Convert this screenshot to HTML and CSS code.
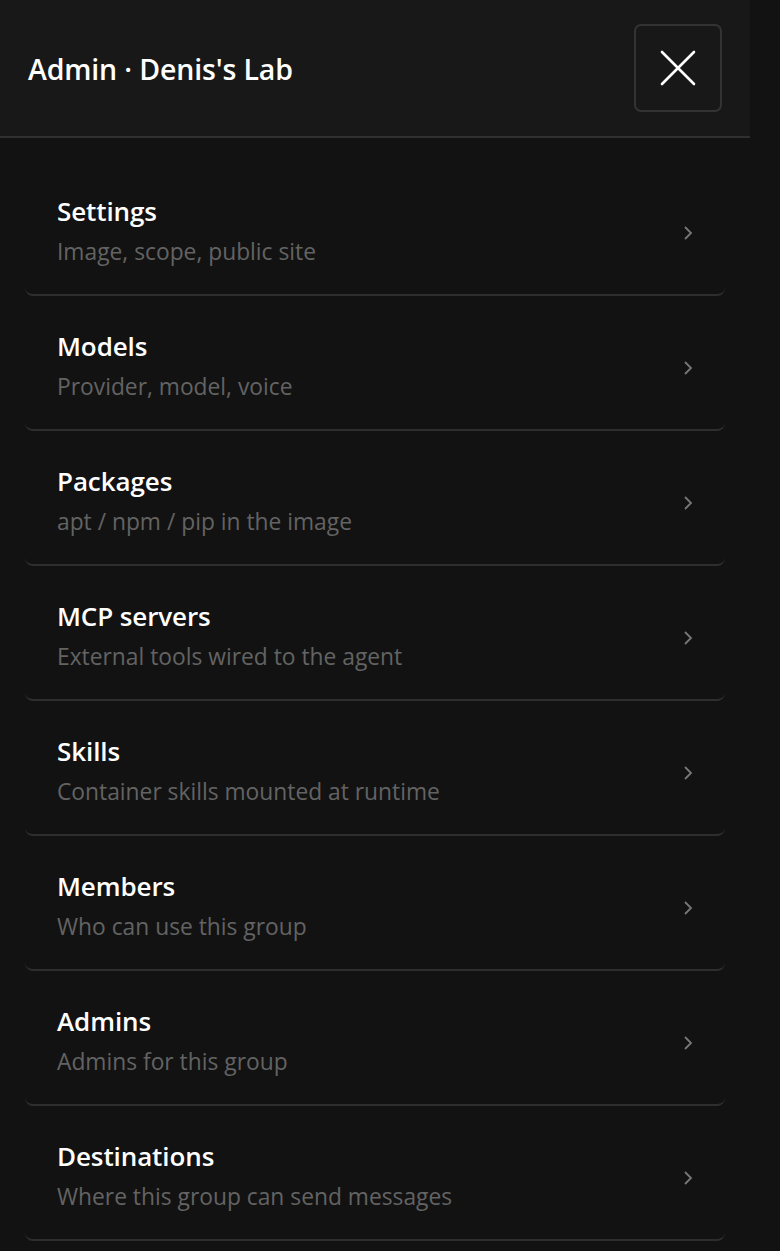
FILE: index.html
```html
<!DOCTYPE html>
<html>
<head>
<meta charset="utf-8">
<link rel="stylesheet" href="styles.css">
</head>
<body>
<div class="panel">
  <header class="head">
    <h1 class="title">Admin · Denis's Lab</h1>
    <button class="close" aria-label="Close">
      <svg width="36" height="36" viewBox="0 0 36 36"><path d="M2 2 L34 34 M34 2 L2 34" stroke="#fff" stroke-width="2.6" stroke-linecap="round" fill="none"/></svg>
    </button>
  </header>
  <ul class="list">
    <li class="item"><div class="txt"><div class="name">Settings</div><div class="desc">Image, scope, public site</div></div><span class="chev"><svg width="10" height="16" viewBox="0 0 10 16"><path d="M2 2 L8 8 L2 14" stroke="#777" stroke-width="1.8" fill="none"/></svg></span></li>
    <li class="item"><div class="txt"><div class="name">Models</div><div class="desc">Provider, model, voice</div></div><span class="chev"><svg width="10" height="16" viewBox="0 0 10 16"><path d="M2 2 L8 8 L2 14" stroke="#777" stroke-width="1.8" fill="none"/></svg></span></li>
    <li class="item"><div class="txt"><div class="name">Packages</div><div class="desc">apt / npm / pip in the image</div></div><span class="chev"><svg width="10" height="16" viewBox="0 0 10 16"><path d="M2 2 L8 8 L2 14" stroke="#777" stroke-width="1.8" fill="none"/></svg></span></li>
    <li class="item"><div class="txt"><div class="name">MCP servers</div><div class="desc">External tools wired to the agent</div></div><span class="chev"><svg width="10" height="16" viewBox="0 0 10 16"><path d="M2 2 L8 8 L2 14" stroke="#777" stroke-width="1.8" fill="none"/></svg></span></li>
    <li class="item"><div class="txt"><div class="name">Skills</div><div class="desc">Container skills mounted at runtime</div></div><span class="chev"><svg width="10" height="16" viewBox="0 0 10 16"><path d="M2 2 L8 8 L2 14" stroke="#777" stroke-width="1.8" fill="none"/></svg></span></li>
    <li class="item"><div class="txt"><div class="name">Members</div><div class="desc">Who can use this group</div></div><span class="chev"><svg width="10" height="16" viewBox="0 0 10 16"><path d="M2 2 L8 8 L2 14" stroke="#777" stroke-width="1.8" fill="none"/></svg></span></li>
    <li class="item"><div class="txt"><div class="name">Admins</div><div class="desc">Admins for this group</div></div><span class="chev"><svg width="10" height="16" viewBox="0 0 10 16"><path d="M2 2 L8 8 L2 14" stroke="#777" stroke-width="1.8" fill="none"/></svg></span></li>
    <li class="item"><div class="txt"><div class="name">Destinations</div><div class="desc">Where this group can send messages</div></div><span class="chev"><svg width="10" height="16" viewBox="0 0 10 16"><path d="M2 2 L8 8 L2 14" stroke="#777" stroke-width="1.8" fill="none"/></svg></span></li>
  </ul>
</div>
</body>
</html>
```

FILE: styles.css
```css
html, body {
  margin: 0;
  padding: 0;
  background: #121212;
  font-family: "Open Sans", "Noto Sans", sans-serif;
  color: #fff;
}
.panel {
  width: 750px;
}
.head {
  height: 138px;
  background: #181818;
  border-bottom: 2px solid #303030;
  display: flex;
  align-items: center;
  justify-content: space-between;
  padding: 0 28px 0 28px;
  box-sizing: border-box;
}
.title {
  margin: 0;
  font-size: 28.5px;
  font-weight: 600;
  letter-spacing: -0.15px;
  line-height: 40px;
  margin-top: 2px;
}
.close {
  width: 88px;
  height: 88px;
  background: #181818;
  border: 2px solid #333;
  border-radius: 7px;
  display: flex;
  align-items: center;
  justify-content: center;
  padding: 0;
}
.list {
  list-style: none;
  margin: 0;
  padding: 23px 25px 0 25px;
}
.item {
  display: flex;
  align-items: center;
  justify-content: space-between;
  height: 135px;
  box-sizing: border-box;
  padding: 6px 32px 0 32px;
  border-bottom: 2px solid #2e2e2e;
  border-radius: 0 0 8px 8px;
}
.name {
  font-size: 26px;
  font-weight: 600;
  line-height: 36px;
  letter-spacing: -0.1px;
}
.desc {
  font-size: 22.8px;
  color: #636363;
  line-height: 34px;
  margin-top: 6px;
}
.chev {
  display: flex;
  margin-top: 4px;
}
```
